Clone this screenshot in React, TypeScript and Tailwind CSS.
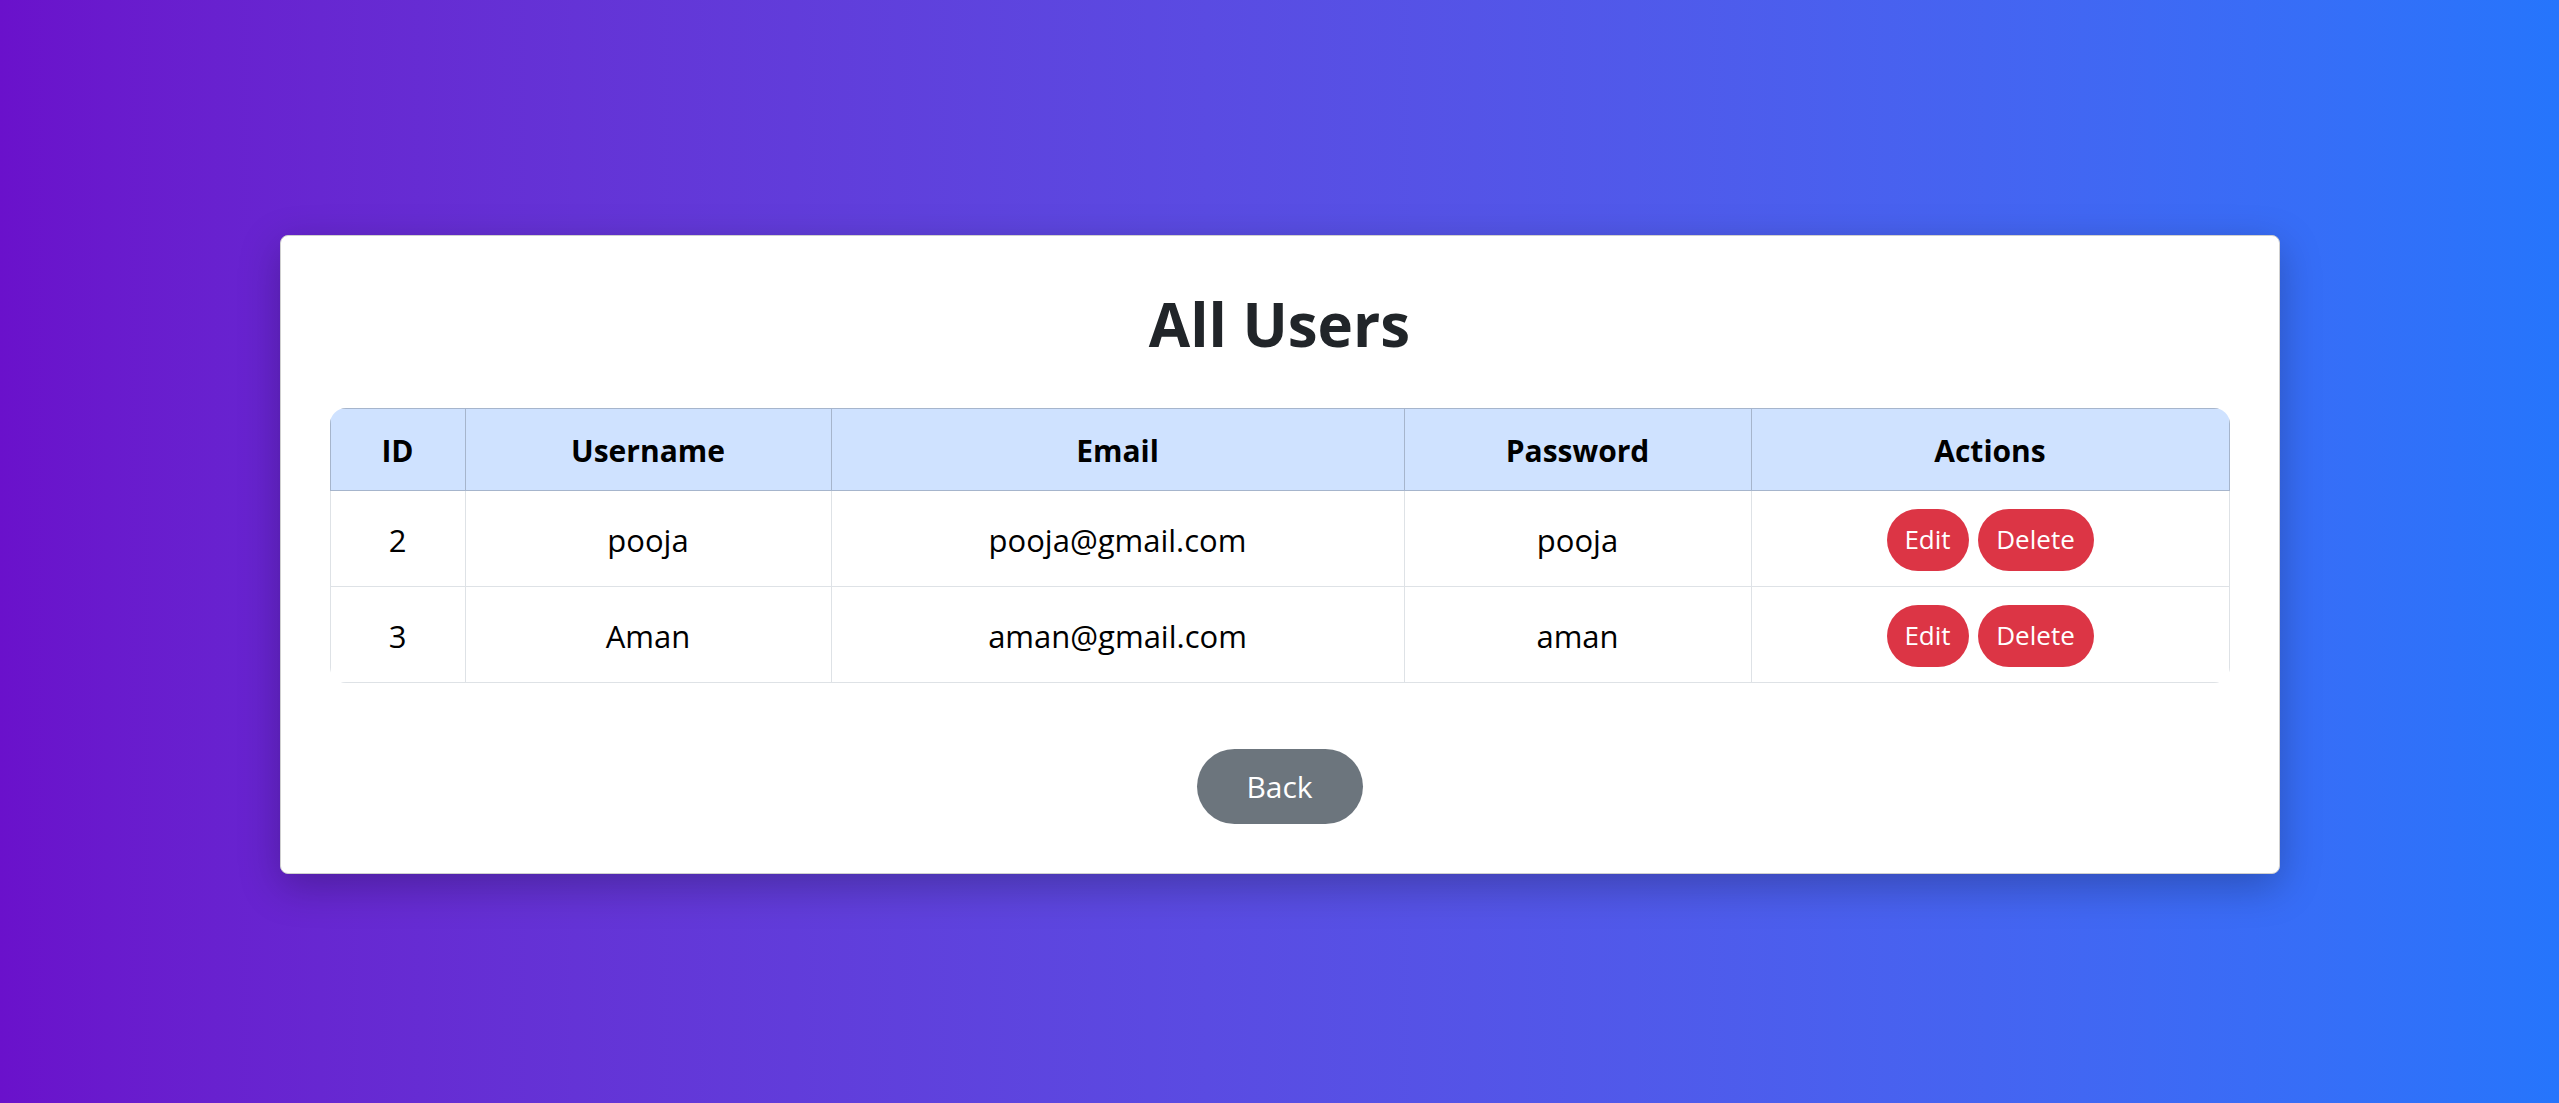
import React from 'react';

interface User {
  id: number;
  username: string;
  email: string;
  password: string;
}

const users: User[] = [
  { id: 2, username: 'pooja', email: 'pooja@gmail.com', password: 'pooja' },
  { id: 3, username: 'Aman', email: 'aman@gmail.com', password: 'aman' },
];

const font = { fontFamily: '"Open Sans", "Noto Sans", sans-serif' };

export default function App() {
  return (
    <div
      className="w-full h-screen pt-[6px] flex items-center justify-center bg-gradient-to-r from-[#6a11cb] to-[#2575fc]"
      style={font}
    >
      <div className="w-[2000px] bg-white border border-[#cfcfcf] rounded-[8px] shadow-[0_12px_40px_rgba(0,0,0,0.25)] px-[49px] pt-[50px] pb-[49px] flex flex-col items-center">
        {/* Title */}
        <h2 className="text-[60px] leading-[77px] font-bold text-[#212529]">All Users</h2>

        {/* Users table */}
        <div className="w-full mt-[45px] rounded-[16px] overflow-hidden">
          <table className="w-full table-fixed border-collapse">
            <colgroup>
              <col className="w-[135px]" />
              <col className="w-[366px]" />
              <col className="w-[573px]" />
              <col className="w-[347px]" />
              <col />
            </colgroup>
            <thead>
              <tr className="bg-[#cfe2ff] h-[82px]">
                {['ID', 'Username', 'Email', 'Password', 'Actions'].map((h) => (
                  <th
                    key={h}
                    className="border border-[#a6b5cc] text-black font-bold text-[30px] text-center align-middle pt-[2px]"
                  >
                    {h}
                  </th>
                ))}
              </tr>
            </thead>
            <tbody>
              {users.map((u) => (
                <tr key={u.id} className="h-[96px] text-[31px] text-black">
                  <td className="border border-[#dee2e6] text-center pt-[4px]">{u.id}</td>
                  <td className="border border-[#dee2e6] text-center pt-[4px]">{u.username}</td>
                  <td className="border border-[#dee2e6] text-center pt-[4px]">{u.email}</td>
                  <td className="border border-[#dee2e6] text-center pt-[4px]">{u.password}</td>
                  <td className="border border-[#dee2e6] pt-[2px]">
                    <div className="flex justify-center gap-[9px]">
                      <button className="w-[82px] h-[62px] rounded-full bg-[#dc3545] text-white text-[26px]">
                        Edit
                      </button>
                      <button className="w-[116px] h-[62px] rounded-full bg-[#dc3545] text-white text-[26px]">
                        Delete
                      </button>
                    </div>
                  </td>
                </tr>
              ))}
            </tbody>
          </table>
        </div>

        <button className="mt-[66px] w-[166px] h-[75px] rounded-full bg-[#6c757d] text-white text-[30px]">
          Back
        </button>
      </div>
    </div>
  );
}
